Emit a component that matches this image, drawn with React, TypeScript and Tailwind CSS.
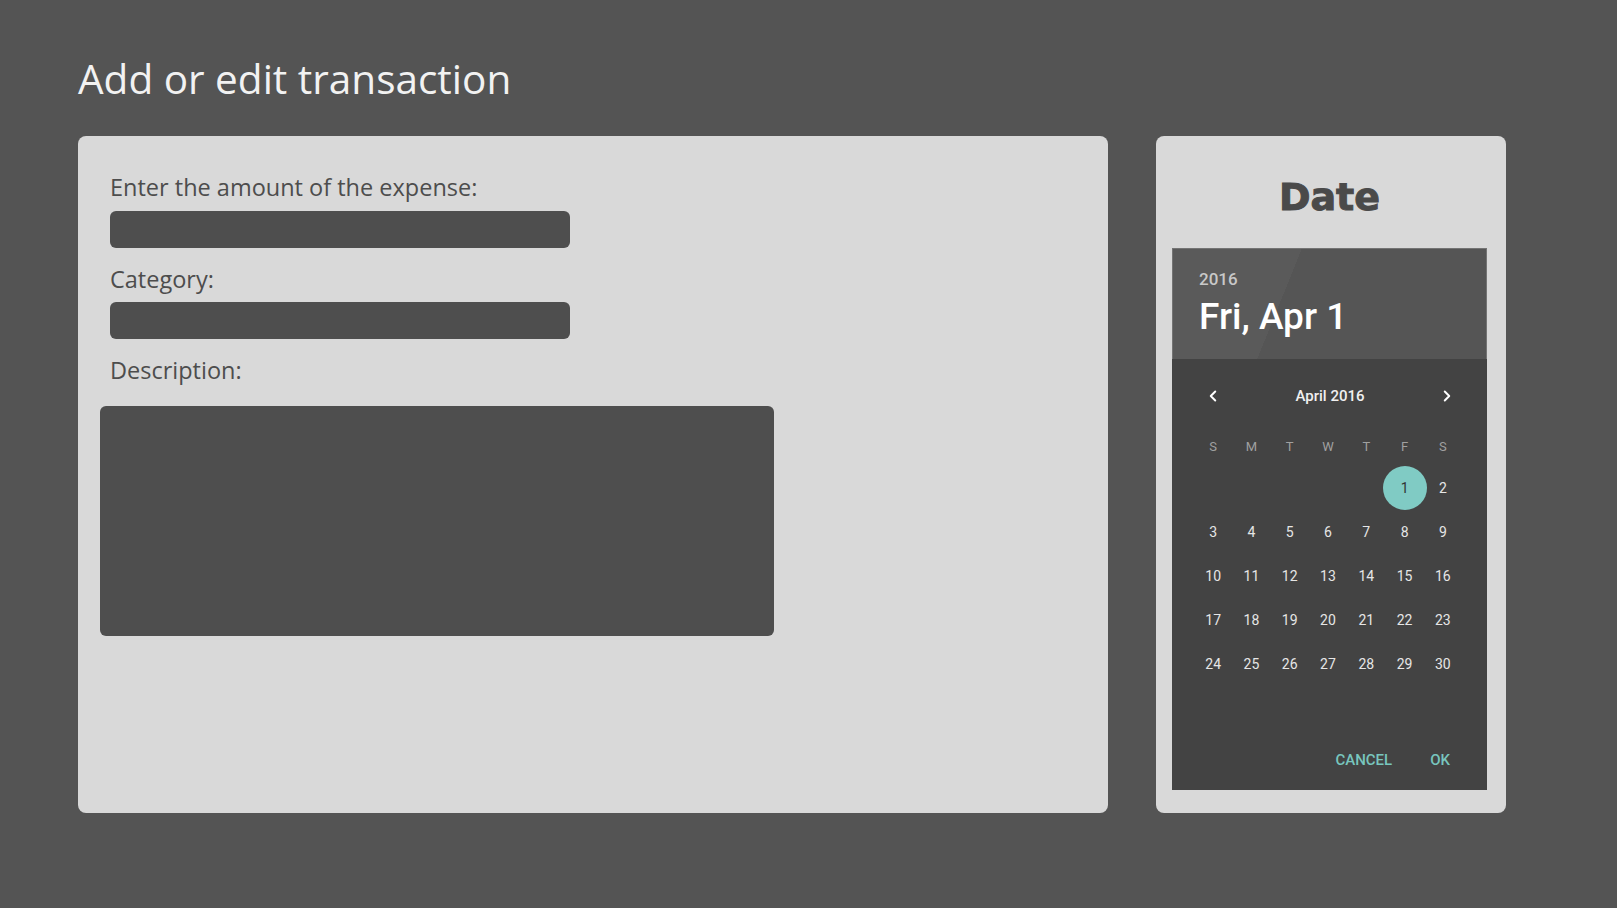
import { ChevronLeft, ChevronRight } from "lucide-react";

const weekDays = ["S", "M", "T", "W", "T", "F", "S"];
// april 2016 starts on a friday
const days: (number | null)[] = [null, null, null, null, null, ...Array.from({ length: 30 }, (_, i) => i + 1)];

export default function App() {
  return (
    <div className="min-h-screen w-full bg-[#545454] pt-[58px] pl-[78px] font-['Open_Sans',sans-serif]">
      <h1 className="text-[40.5px] leading-[42px] text-[#f2f2f2]">Add or edit transaction</h1>

      <div className="mt-[36px] flex gap-[48px]">
        {/* form card */}
        <div className="w-[1030px] h-[677px] rounded-lg bg-[#d9d9d9] pt-[40px] pl-[32px] text-[#4d4d4d]">
          <label className="block text-[23.5px] leading-[23px]">Enter the amount of the expense:</label>
          <div className="mt-[12px] h-[37px] w-[460px] rounded-md bg-[#4e4e4e]" />
          <label className="block mt-[20px] text-[23.5px] leading-[23px]">Category:</label>
          <div className="mt-[11px] h-[37px] w-[460px] rounded-md bg-[#4e4e4e]" />
          <label className="block mt-[20px] text-[23.5px] leading-[23px]">Description:</label>
          <div className="mt-[24px] -ml-[10px] h-[230px] w-[674px] rounded-md bg-[#4e4e4e]" />
        </div>

        {/* date card */}
        <div className="w-[350px] h-[677px] rounded-lg bg-[#d9d9d9] pl-[16px] pt-[43px]">
          <h2 className="w-[315px] text-center text-[38px] leading-[37px] font-bold text-[#4a4a4a] [-webkit-text-stroke:1px_#4a4a4a] font-['DejaVu_Sans',sans-serif]">
            Date
          </h2>

          <div className="mt-[32px] w-[315px] h-[542px] flex flex-col bg-[#434343] font-['Roboto',sans-serif]">
            <div className="h-[111px] border-t border-x border-[#747474] bg-[linear-gradient(112deg,#5a5a5a_0%,#5a5a5a_36%,#555555_36%,#555555_100%)] pl-[26px] pt-[22px]">
              <div className="text-[17px] leading-[17px] font-medium text-[#c8c8c8]">2016</div>
              <div className="mt-[11px] text-[37px] leading-[36px] font-medium text-white">Fri, Apr 1</div>
            </div>

            <div className="flex-1 flex flex-col">
              <div className="mt-[17px] h-[40px] flex items-center justify-between pl-[32px] pr-[31px] text-white">
                <ChevronLeft size={18} strokeWidth={2.6} />
                <span className="text-[15px] font-medium text-[#f0f0f0]">April 2016</span>
                <ChevronRight size={18} strokeWidth={2.6} />
              </div>

              <div className="mt-[16px] ml-[22px] w-[268px] grid grid-cols-7 h-[30px] items-center text-[13px] text-[#a0a0a0]">
                {weekDays.map((d, i) => (
                  <span key={i} className="text-center">
                    {d}
                  </span>
                ))}
              </div>

              <div className="mt-[4px] ml-[22px] w-[268px] grid grid-cols-7 auto-rows-[44px] text-[14px] text-[#e6e6e6]">
                {days.map((d, i) => (
                  <div key={i} className="flex items-center justify-center">
                    {d === 1 ? (
                      <span className="shrink-0 w-[44px] h-[44px] rounded-full bg-[#80cbc4] text-[#333333] flex items-center justify-center">
                        1
                      </span>
                    ) : (
                      d
                    )}
                  </div>
                ))}
              </div>

              <div className="mt-auto pb-[22px] pr-[37px] flex justify-end gap-[38px] text-[15px] leading-[15px] font-medium text-[#78c6be]">
                <span>CANCEL</span>
                <span>OK</span>
              </div>
            </div>
          </div>
        </div>
      </div>
    </div>
  );
}
